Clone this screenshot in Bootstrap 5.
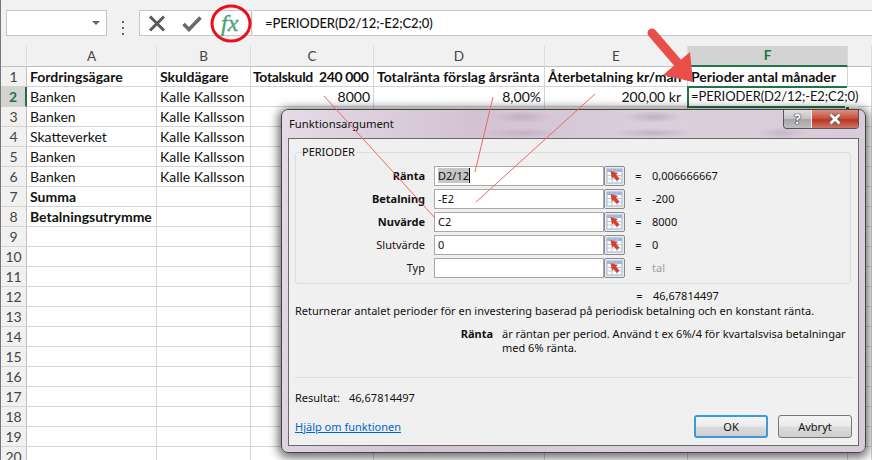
<!DOCTYPE html>
<html lang="sv">
<head>
<meta charset="UTF-8">
<title>Funktionsargument</title>
<link href="https://cdn.jsdelivr.net/npm/bootstrap@5.3.0/dist/css/bootstrap.min.css" rel="stylesheet">
<style>
    html, body { height: 460px; overflow: hidden; background: #fff; }
    .sheet-wrap { position: relative; width: 872px; height: 460px; overflow: hidden; border-left: 1px solid #777; font-family: Lato, "Liberation Sans", sans-serif; color: #111; }

    /* formula bar */
    .fbar { height: 46px; background: #f1f1f1; padding-top: 10px; }
    .name-box { width: 101px; height: 26px; margin-left: 5px; background: #fff; border: 1px solid #c6c6c6; padding-right: 6px; }
    .name-arrow { width: 0; height: 0; border-left: 4px solid transparent; border-right: 4px solid transparent; border-top: 4px solid #666; }
    .fbar-dots { width: 32px; color: #555; }
    .fbar-dots i { display: block; width: 2px; height: 2px; background: #666; margin: 2px 0; }
    .fx-box { width: 113px; height: 26px; background: #fff; border: 1px solid #c6c6c6; }
    .fx-text { font-family: "Liberation Serif", serif; font-style: italic; font-weight: 400; font-size: 24px; line-height: 24px; color: #4fa37a; -webkit-text-stroke: .4px #4fa37a; margin-left: 19px; }
    .formula-input { height: 26px; margin-left: 1px; background: #fff; border: solid #c6c6c6; border-width: 1px 0; font-size: 13px; letter-spacing: -.1px; line-height: 24px; padding-left: 12px; font-weight: 500; color: #111; }

    /* grid */
    .xl-grid { table-layout: fixed; width: 871px; border-collapse: separate; border-spacing: 0; font-size: 14px; }
    .xl-grid td, .xl-grid th { height: 20px; padding: 0 3px; line-height: 19px; border-right: 1px solid #d4d4d4; border-bottom: 1px solid #d4d4d4; white-space: nowrap; overflow: hidden; font-weight: 400; }
    .xl-grid .bold-cell { font-weight: 700; }
    .xl-grid .tight-cell { letter-spacing: -.35px; padding-left: 2px; }
    .xl-grid .amount-cell { padding-right: 6px; }
    .xl-grid thead th { background: #f1f1f1; color: #444; text-align: center; border-right-color: #dcdcdc; border-bottom-color: #c0c0c0; font-size: 13.500px; }
    .xl-grid tbody th { background: #f1f1f1; color: #444; text-align: center; padding: 0; border-right-color: #c0c0c0; font-size: 14px; }
    .xl-grid thead th.active-col { background: #d3d3d3; color: #217346; font-weight: 700; border-bottom: 2px solid #217346; }
    .xl-grid tbody th.active-row { background: #d3d3d3; color: #217346; font-weight: 700; border-right: 2px solid #217346; }
    .xl-grid td.sel-host { overflow: visible; position: relative; }
    .edit-cell { position: absolute; left: -1px; top: 0; width: 171px; height: 20px; background: #fff; line-height: 19px; padding-left: 4px; font-size: 13px; letter-spacing: -.1px; z-index: 1; }
    .sel-frame { position: absolute; left: -1px; top: -1px; width: 160px; height: 22px; border: solid #217346; border-width: 2px 0 2px 2px; z-index: 2; }
    .edit-handle { position: absolute; left: 157px; top: 19px; width: 5px; height: 5px; background: #217346; border: 1px solid #fff; z-index: 2; }

    /* drawn notes on top */
    .notes { position: absolute; left: 0; top: 0; width: 872px; height: 460px; z-index: 5; pointer-events: none; }

    /* dialog */
    .dlg { position: absolute; left: 280px; top: 109px; width: 585px; height: 344px; z-index: 4; border: 1px solid #444; border-radius: 7px; padding: 28px 6px 6px; font-family: "Noto Sans", sans-serif; font-size: 11px; color: #111;
        box-shadow: 0 2px 10px 3px rgba(0,0,0,.55);
        background:
            radial-gradient(ellipse 30px 6px at 240px 7px, #c0b0c0, transparent),
            radial-gradient(ellipse 40px 5px at 240px 23px, #c2b2c2, transparent),
            radial-gradient(ellipse 30px 6px at 372px 7px, #c0b0c0, transparent),
            radial-gradient(ellipse 40px 5px at 372px 23px, #c2b2c2, transparent),
            radial-gradient(ellipse 26px 6px at 500px 23px, #c6b6c6, transparent),
            linear-gradient(100deg, #e6dbe6 0, #d3c2d3 30%, #dccfdc 60%, #d8cbd9 100%); }
    .dlg-title { position: absolute; left: 7px; top: 6px; font-size: 11.300px; line-height: 16px; }
    .dlg-ctrl { position: absolute; right: 6px; top: 0; height: 19px; border: 1px solid #555; border-top: 0; border-radius: 0 0 4px 4px; }
    .ctrl-help { width: 28px; background: linear-gradient(#e2dfe2, #c5c2c6 48%, #a8a5a9 52%, #bfbcc0); color: #fff; font-weight: 700; font-size: 14px; line-height: 18px; text-align: center; text-shadow: 0 0 1px #222, 0 0 1px #222, 0 0 1px #222; border-right: 1px solid #eee; border-radius: 0 0 0 4px; }
    .ctrl-close { width: 46px; background: linear-gradient(#dd9083, #c9523f 45%, #b83723 55%, #cf7565); border-radius: 0 0 4px 0; }
    .dlg-panel { height: 100%; background: #f0f0f0; border: 1px solid #6a6a6a; padding: 13px 7px 0 6px; }
    .arg-box { position: relative; height: 132px; border: 1px solid #d5dfe5; border-radius: 3px; padding-top: 13px; }
    .arg-legend { position: absolute; left: 5px; top: -8px; background: #f0f0f0; padding: 0 1px; line-height: 14px; }
    .arg-row { height: 20px; margin-bottom: 3px; line-height: 19px; }
    .arg-label { width: 129px; text-align: right; margin-right: 9px; }
    .arg-input.form-control { width: 170px; height: 20px; min-height: 0; border: 1px solid #a9a9a9; border-radius: 0; padding: 0 3px; font-size: 11px; line-height: 18px; color: #111; background: #fff; }
    .arg-sel { background: #c6c6c6; border-right: 1px solid #000; }
    .ref-btn { width: 21px; height: 20px; display: block; }
    .arg-eq { width: 27px; text-align: center; }
    .arg-grey { color: #a0a0a0; }
    .total-row { height: 15px; line-height: 15px; margin-top: 4px; padding-left: 331px; }
    .desc-line { line-height: 15px; margin-top: 0; }
    .help-block { margin-top: 9px; line-height: 13.500px; height: 32px; }
    .help-name { width: 198px; text-align: right; font-weight: 700; margin-right: 9px; }
    .dlg-rule { height: 1px; background: #d5dfe5; margin: 18px -2px 0 0; }
    .result-line { margin-top: 12px; line-height: 15px; }
    .result-line span { margin-left: 9px; }
    .dlg-foot { margin-top: 10px; }
    .dlg-foot a { color: #0066cc; }
    .win-btn.btn { width: 74px; height: 23px; padding: 0; font-size: 11px; line-height: 20px; border: 1px solid #777; border-radius: 3px; color: #111; background: linear-gradient(#f4f4f4, #ebebeb 48%, #dcdcdc 52%, #cfcfcf); }
    .win-btn.win-default { border: 2px solid #3c9ad6; line-height: 19px; }
    .btn-pair { gap: 10px; margin-right: -1px; }
</style>
</head>
<body>
<div class="sheet-wrap">
    <svg width="0" height="0" class="d-block">
        <symbol id="refIcon" viewBox="0 0 21 20">
            <rect x=".5" y=".5" width="20" height="19" rx="1.5" fill="#ececec" stroke="#8a8a8a"/>
            <rect x="3" y="3" width="15" height="14" fill="#fff" stroke="#9db4d2"/>
            <rect x="3" y="3" width="15" height="3" fill="#9db8dd"/>
            <path d="M3 9.500h15M3 13h15M8 3v14M13 3v14" stroke="#b5c7de" fill="none"/>
            <path d="M6.500 5L13.500 7L12 8.700L15.500 12.500L13 15L9.500 11.200L8 12.500Z" fill="#d9402c"/>
        </symbol>
    </svg>

    <div class="fbar d-flex">
        <div class="name-box d-flex align-items-center justify-content-end"><span class="name-arrow"></span></div>
        <div class="fbar-dots d-flex flex-column align-items-center justify-content-center"><i></i><i></i><i></i></div>
        <div class="fx-box d-flex align-items-center">
            <svg class="ms-2" width="18" height="17" viewBox="0 0 18 17"><path d="M2 1.500l14 14M16 1.500l-14 14" stroke="#5a5a5a" stroke-width="3" fill="none"/></svg>
            <svg class="ms-3" width="20" height="17" viewBox="0 0 20 17"><path d="M1.500 9l5.500 5.500L18.500 2.500" stroke="#6a6a6a" stroke-width="3.600" fill="none"/></svg>
            <span class="fx-text">fx</span>
        </div>
        <div class="formula-input flex-grow-1">=PERIODER(D2/12;-E2;C2;0)</div>
    </div>

    <table class="xl-grid">
        <colgroup><col style="width:26px"><col style="width:130px"><col style="width:94px"><col style="width:123px"><col style="width:171px"><col style="width:143px"><col style="width:160px"><col style="width:24px"></colgroup>
        <thead><tr><th></th><th>A</th><th>B</th><th>C</th><th>D</th><th>E</th><th class="active-col">F</th><th></th></tr></thead>
        <tbody>
            <tr><th>1</th><td class="bold-cell">Fordringsägare</td><td class="bold-cell">Skuldägare</td><td class="bold-cell tight-cell">Totalskuld&nbsp; 240 000</td><td class="bold-cell">Totalränta förslag årsränta</td><td class="bold-cell">Återbetalning kr/mån</td><td class="bold-cell">Perioder antal månader</td><td></td></tr>
            <tr><th class="active-row">2</th><td>Banken</td><td>Kalle Kallsson</td><td class="text-end">8000</td><td class="text-end">8,00%</td><td class="text-end amount-cell">200,00 kr</td><td class="sel-host"><div class="edit-cell">=PERIODER(D2/12;-E2;C2;0)</div><div class="sel-frame"></div><div class="edit-handle"></div></td><td></td></tr>
            <tr><th>3</th><td>Banken</td><td>Kalle Kallsson</td><td></td><td></td><td></td><td></td><td></td></tr>
            <tr><th>4</th><td>Skatteverket</td><td>Kalle Kallsson</td><td></td><td></td><td></td><td></td><td></td></tr>
            <tr><th>5</th><td>Banken</td><td>Kalle Kallsson</td><td></td><td></td><td></td><td></td><td></td></tr>
            <tr><th>6</th><td>Banken</td><td>Kalle Kallsson</td><td></td><td></td><td></td><td></td><td></td></tr>
            <tr><th>7</th><td class="bold-cell">Summa</td><td></td><td></td><td></td><td></td><td></td><td></td></tr>
            <tr><th>8</th><td class="bold-cell">Betalningsutrymme</td><td></td><td></td><td></td><td></td><td></td><td></td></tr>
            <tr><th>9</th><td></td><td></td><td></td><td></td><td></td><td></td><td></td></tr>
            <tr><th>10</th><td></td><td></td><td></td><td></td><td></td><td></td><td></td></tr>
            <tr><th>11</th><td></td><td></td><td></td><td></td><td></td><td></td><td></td></tr>
            <tr><th>12</th><td></td><td></td><td></td><td></td><td></td><td></td><td></td></tr>
            <tr><th>13</th><td></td><td></td><td></td><td></td><td></td><td></td><td></td></tr>
            <tr><th>14</th><td></td><td></td><td></td><td></td><td></td><td></td><td></td></tr>
            <tr><th>15</th><td></td><td></td><td></td><td></td><td></td><td></td><td></td></tr>
            <tr><th>16</th><td></td><td></td><td></td><td></td><td></td><td></td><td></td></tr>
            <tr><th>17</th><td></td><td></td><td></td><td></td><td></td><td></td><td></td></tr>
            <tr><th>18</th><td></td><td></td><td></td><td></td><td></td><td></td><td></td></tr>
            <tr><th>19</th><td></td><td></td><td></td><td></td><td></td><td></td><td></td></tr>
            <tr><th>20</th><td></td><td></td><td></td><td></td><td></td><td></td><td></td></tr>
        </tbody>
    </table>

    <div class="dlg">
        <div class="dlg-title">Funktionsargument</div>
        <div class="dlg-ctrl d-flex">
            <div class="ctrl-help">?</div>
            <div class="ctrl-close d-flex align-items-center justify-content-center">
                <svg width="14" height="12" viewBox="0 0 14 12"><path d="M2.500 1.500l9 9M11.500 1.500l-9 9" stroke="#555" stroke-width="4.400" fill="none"/><path d="M2.500 1.500l9 9M11.500 1.500l-9 9" stroke="#fff" stroke-width="2.800" fill="none"/></svg>
            </div>
        </div>
        <div class="dlg-panel">
            <div class="arg-box">
                <span class="arg-legend">PERIODER</span>
                <div class="arg-row d-flex"><div class="arg-label fw-bold">Ränta</div><div class="arg-input form-control"><span class="arg-sel">D2/12</span></div><svg class="ref-btn"><use href="#refIcon"/></svg><div class="arg-eq">=</div><div>0,006666667</div></div>
                <div class="arg-row d-flex"><div class="arg-label fw-bold">Betalning</div><div class="arg-input form-control">-E2</div><svg class="ref-btn"><use href="#refIcon"/></svg><div class="arg-eq">=</div><div>-200</div></div>
                <div class="arg-row d-flex"><div class="arg-label fw-bold">Nuvärde</div><div class="arg-input form-control">C2</div><svg class="ref-btn"><use href="#refIcon"/></svg><div class="arg-eq">=</div><div>8000</div></div>
                <div class="arg-row d-flex"><div class="arg-label">Slutvärde</div><div class="arg-input form-control">0</div><svg class="ref-btn"><use href="#refIcon"/></svg><div class="arg-eq">=</div><div>0</div></div>
                <div class="arg-row d-flex"><div class="arg-label">Typ</div><div class="arg-input form-control"></div><svg class="ref-btn"><use href="#refIcon"/></svg><div class="arg-eq">=</div><div class="arg-grey">tal</div></div>
            </div>
            <div class="total-row d-flex"><div class="arg-eq">=</div><div>46,67814497</div></div>
            <div class="desc-line">Returnerar antalet perioder för en investering baserad på periodisk betalning och en konstant ränta.</div>
            <div class="help-block d-flex">
                <div class="help-name">Ränta</div>
                <div>är räntan per period. Använd t ex 6%/4 för kvartalsvisa betalningar<br>med 6% ränta.</div>
            </div>
            <div class="dlg-rule"></div>
            <div class="result-line">Resultat:<span>46,67814497</span></div>
            <div class="dlg-foot d-flex justify-content-between align-items-start">
                <a href="#" class="mt-1">Hjälp om funktionen</a>
                <div class="d-flex btn-pair">
                    <button type="button" class="btn win-btn win-default">OK</button>
                    <button type="button" class="btn win-btn">Avbryt</button>
                </div>
            </div>
        </div>
    </div>

    <svg class="notes" viewBox="0 0 872 460">
        <ellipse cx="230" cy="23.500" rx="19" ry="17.500" fill="none" stroke="#e8101c" stroke-width="3"/>
        <path d="M323 96L434 218M492 97L474 172M594 94L475 202" stroke="#ea6a62" stroke-width="1" fill="none"/>
        <path d="M651 33L676 62" stroke="#e84f48" stroke-width="9" stroke-linecap="round"/>
        <path d="M689 52L692 82L662 75z" fill="#e84f48"/>
    </svg>
</div>
<script src="https://cdn.jsdelivr.net/npm/bootstrap@5.3.0/dist/js/bootstrap.bundle.min.js"></script>
</body>
</html>
